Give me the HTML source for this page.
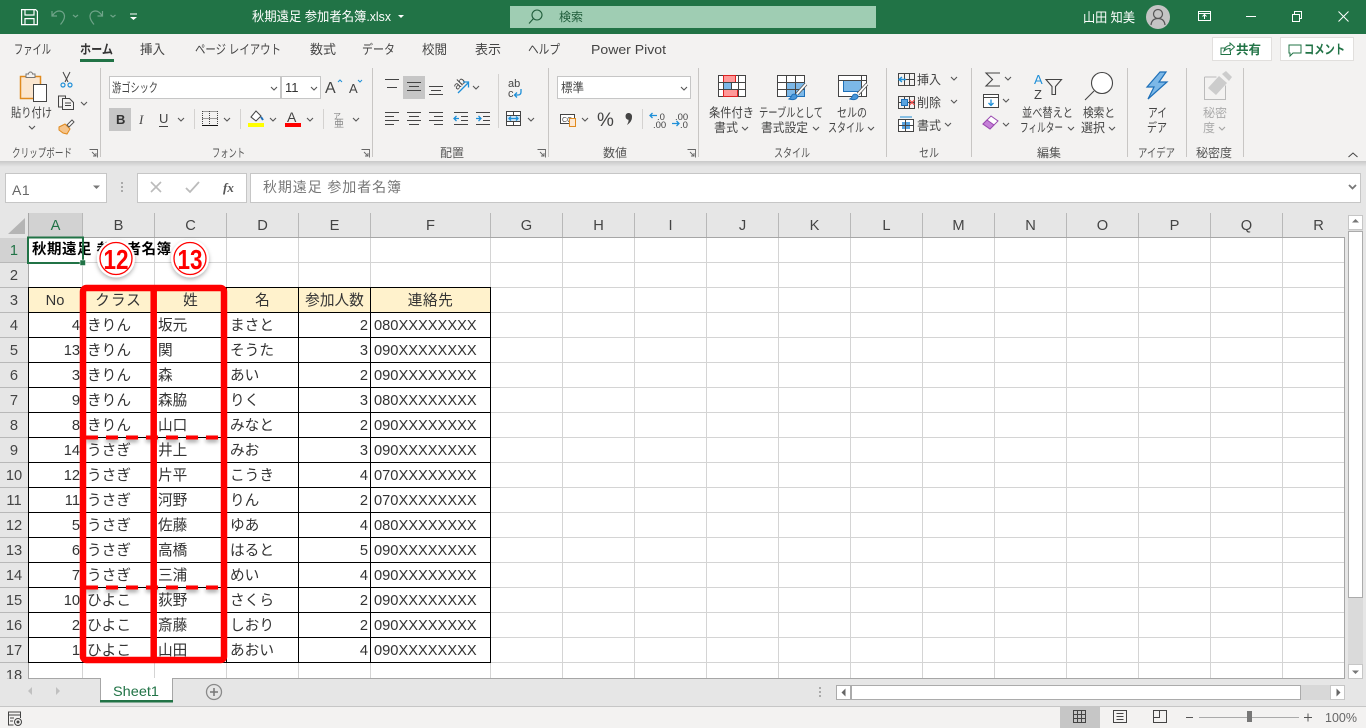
<!DOCTYPE html>
<html lang="ja"><head><meta charset="utf-8"><title>Excel</title>
<style>
html,body{margin:0;padding:0;width:1366px;height:728px;overflow:hidden;background:#fff}
svg{display:block;position:absolute;left:0;top:0;font-family:"Liberation Sans","Noto Sans CJK JP",sans-serif}
.t{font-size:13px;fill:#444}
.r{font-size:12.5px;fill:#444}
.l{font-size:12px;fill:#555}
.h{font-size:14.67px;fill:#444;text-anchor:middle}
.c{font-size:14.67px;fill:#333}
.n{font-size:14.67px;fill:#333;text-anchor:end}
.m{font-size:14.67px;fill:#333;text-anchor:middle}
.ic{fill:none;stroke:#444;stroke-width:1}
.bl{fill:none;stroke:#1e8fd8;stroke-width:1.3}
</style></head><body>
<svg width="1366" height="728" viewBox="0 0 1366 728" xmlns="http://www.w3.org/2000/svg">
<defs>
<path id="ch" d="M0 0l3 3 3-3" fill="none" stroke="#555" stroke-width="1.1"/>
<linearGradient id="sh" x1="0" y1="0" x2="0" y2="1"><stop offset="0" stop-color="#c8c8c8"/><stop offset="1" stop-color="#e6e6e6"/></linearGradient>
<filter id="ds" filterUnits="userSpaceOnUse" x="60" y="420" width="190" height="190"><feDropShadow dx="0" dy="2.500" stdDeviation="2" flood-color="#000" flood-opacity=".4"/></filter>
<filter id="ds2" x="-30%" y="-30%" width="160%" height="160%"><feDropShadow dx="0" dy="2" stdDeviation="2" flood-color="#000" flood-opacity=".3"/></filter>
</defs>

<!-- backgrounds -->
<rect width="1366" height="728" fill="#e6e6e6"/>
<rect y="0" width="1366" height="34" fill="#217346"/>
<rect y="34" width="1366" height="127" fill="#f3f2f1"/>
<rect y="161" width="1366" height="6" fill="url(#sh)"/>

<!-- title bar -->
<g fill="none" stroke="#fff" stroke-width="1.2">
<path d="M21.600 9.600h14l1.800 1.800v13.200h-15.800z"/><path d="M25 9.600v5.400h9v-5.400M25 24.600v-6h9v6"/>
</g>
<g fill="none" stroke="#6fa489" stroke-width="1.2">
<path d="M52 11v5h5M52.500 15.500c2-3 4-4.500 6.500-4.500 3.500 0 5.500 2.500 5.500 5.500 0 2.500-1.500 5-4 8"/>
<path d="M73 15l2.500 2 2.500-2"/>
<path d="M102.500 11v5h-5M102 15.500c-2-3-4-4.500-6.500-4.500-3.500 0-5.500 2.500-5.500 5.500 0 2.500 1.500 5 4 8"/>
<path d="M110.500 15l2.500 2 2.500-2"/>
</g>
<path d="M130 14h7" stroke="#fff" fill="none"/><path d="M130 17l3.500 3 3.500-3z" fill="#fff"/>
<text x="252" y="21" font-size="13" fill="#fff" textLength="139" lengthAdjust="spacingAndGlyphs">秋期遠足 参加者名簿.xlsx</text>
<path d="M398 15h6l-3 3z" fill="#fff"/>
<rect x="510" y="6" width="366" height="22" fill="#9fcdb3"/>
<g fill="none" stroke="#1f5c3a" stroke-width="1.1"><circle cx="537" cy="15" r="5"/><path d="M533.500 18.500l-4.500 5"/></g>
<text x="559" y="21" font-size="12" fill="#1f5c3a">検索</text>
<text x="1083" y="22" font-size="13" fill="#fff" textLength="52" lengthAdjust="spacingAndGlyphs">山田 知美</text>
<circle cx="1158" cy="17" r="12" fill="#c4c4c4"/>
<g fill="none" stroke="#555" stroke-width="1.2"><circle cx="1158" cy="14" r="4.500"/><path d="M1151 25c.5-4.500 3-6.500 7-6.500s6.500 2 7 6.500"/></g>
<g fill="none" stroke="#fff" stroke-width="1">
<rect x="1198.500" y="11.500" width="12" height="9"/><path d="M1198.500 13.500h12M1204.500 19v-4M1202.500 16.500l2-2 2 2"/>
<path d="M1246 16.500h10"/>
<rect x="1292.500" y="14.500" width="7" height="7"/><path d="M1294.500 14v-2.500h7v7h-2"/>
<path d="M1338.500 11.500l10 10M1348.500 11.500l-10 10"/>
</g>

<!-- tabs -->
<g>
<text x="14" y="54" class="t" textLength="37" lengthAdjust="spacingAndGlyphs">ファイル</text>
<text x="80" y="54" class="t" font-weight="700" textLength="33" lengthAdjust="spacingAndGlyphs" style="fill:#333">ホーム</text>
<text x="140" y="54" class="t" textLength="25" lengthAdjust="spacingAndGlyphs">挿入</text>
<text x="195" y="54" class="t" textLength="86" lengthAdjust="spacingAndGlyphs">ページ レイアウト</text>
<text x="310" y="54" class="t" textLength="26" lengthAdjust="spacingAndGlyphs">数式</text>
<text x="362" y="54" class="t" textLength="33" lengthAdjust="spacingAndGlyphs">データ</text>
<text x="422" y="54" class="t" textLength="25" lengthAdjust="spacingAndGlyphs">校閲</text>
<text x="475" y="54" class="t" textLength="26" lengthAdjust="spacingAndGlyphs">表示</text>
<text x="528" y="54" class="t" textLength="32" lengthAdjust="spacingAndGlyphs">ヘルプ</text>
<text x="591" y="54" class="t" textLength="75" lengthAdjust="spacingAndGlyphs">Power Pivot</text>
</g>
<rect x="80" y="59" width="34" height="3" fill="#217346"/>
<rect x="1212.500" y="37.500" width="59" height="23" fill="#fff" stroke="#e1dfdd"/>
<rect x="1280.500" y="37.500" width="73" height="23" fill="#fff" stroke="#e1dfdd"/>
<g fill="none" stroke="#217346" stroke-width="1"><path d="M1226 48h-5v6.500h9.500v-3M1224 51c1-4 3-5.500 6-5.500v-2.500l4.500 4-4.500 4v-2.500c-2.500 0-4.500 1-6 2.500z"/>
<path d="M1289 45h12v8h-8l-3 3v-3h-1z"/></g>
<text x="1236" y="54" font-size="12.500" font-weight="700" fill="#217346" textLength="25" lengthAdjust="spacingAndGlyphs">共有</text>
<text x="1304" y="54" font-size="13" font-weight="700" fill="#217346" textLength="41" lengthAdjust="spacingAndGlyphs">コメント</text>

<!-- ribbon separators -->
<g stroke="#c8c6c4" stroke-width="1">
<path d="M100.500 68v89M372.500 68v89M548.500 68v89M698.500 68v89M886.500 68v89M971.500 68v89M1127.500 68v89M1186.500 68v89M1243.500 68v89"/>
<path d="M194.500 109v20M240.500 109v20M323.500 109v20M498.500 74v54M642.500 109v20" stroke="#d4d2d0"/>
</g>

<!-- clipboard -->
<rect x="20.500" y="76.500" width="20" height="22" fill="#fbe6cf" stroke="#e08a1e" stroke-width="1.500"/>
<path d="M26 76v-2h2.500a2 2 0 0 1 4 0h2.500v3.500h-9z" fill="#f3f2f1" stroke="#777"/>
<rect x="33.500" y="84.500" width="13" height="17" fill="#fff" stroke="#444"/>
<text x="11" y="117" class="r" textLength="41" lengthAdjust="spacingAndGlyphs">貼り付け</text>
<use href="#ch" x="29" y="126"/>
<g fill="none" stroke="#444"><path d="M63 72l5 10M70 72l-5 10"/></g>
<g fill="none" stroke="#1e8fd8" stroke-width="1.200"><circle cx="63" cy="85" r="2"/><circle cx="70" cy="85" r="2"/></g>
<g fill="none" stroke="#444"><path d="M62 107h-3.500v-11h7v2"/><path d="M62.500 98.500h7l4 4v7h-11z" fill="#f3f2f1"/><path d="M65 103h6M65 105.500h6"/></g>
<use href="#ch" x="81" y="102"/>
<path d="M59 127l6-3 5 5-3 5-4-1-4-3z" fill="#f6c48a" stroke="#e08a1e"/><path d="M67 125l5-5 2 2-5 5z" fill="#fff" stroke="#555"/>
<text x="12" y="157" class="l" textLength="60" lengthAdjust="spacingAndGlyphs">クリップボード</text>
<g id="lau" fill="none" stroke="#666" stroke-width=".9"><path d="M89.500 149.500h8v8M92 152l4 4M96 153v3h-3"/></g>
<use href="#lau" x="272"/><use href="#lau" x="448"/><use href="#lau" x="598"/>

<!-- font -->
<rect x="109.500" y="76.500" width="171" height="22" fill="#fff" stroke="#c6c6c6"/>
<rect x="281.500" y="76.500" width="39" height="22" fill="#fff" stroke="#c6c6c6"/>
<text x="112" y="92" class="r" textLength="46" lengthAdjust="spacingAndGlyphs">游ゴシック</text>
<text x="285" y="92" font-size="13" fill="#333">11</text>
<use href="#ch" x="271" y="87"/><use href="#ch" x="311" y="87"/>
<text x="325" y="93" font-size="16" fill="#444">A</text><path d="M338 82l2-2 2 2" fill="none" stroke="#1e8fd8"/>
<text x="349" y="93" font-size="13" fill="#444">A</text><path d="M358 80l2 2 2-2" fill="none" stroke="#1e8fd8"/>
<rect x="109" y="108" width="22" height="23" fill="#c6c6c6"/>
<text x="116" y="124" font-size="13" font-weight="700" fill="#333">B</text>
<text x="139" y="124" font-size="13" font-style="italic" fill="#444" font-family="Liberation Serif">I</text>
<text x="159" y="123" font-size="13" fill="#444">U</text><path d="M159 126.500h9" stroke="#444"/>
<use href="#ch" x="178" y="118"/>
<g stroke="#444" stroke-dasharray="1 1" fill="none"><path d="M202.500 111.500h15M202.500 118.500h15M202.500 111v14M209.500 111v14M217.500 111v14"/></g><path d="M202 125.500h16" stroke="#111"/>
<use href="#ch" x="224" y="118"/>
<path d="M251 117l5-6 5 5-5 5z" fill="#fff" stroke="#444"/><path d="M261 117l2 3" stroke="#1e6fb8" stroke-width="2"/>
<rect x="248" y="123" width="16" height="4" fill="#ffff00"/>
<use href="#ch" x="270" y="118"/>
<text x="287" y="122" font-size="14" fill="#444">A</text>
<rect x="285" y="123" width="16" height="4" fill="#f00"/>
<use href="#ch" x="307" y="118"/>
<text x="333" y="119" font-size="8" fill="#888">ア</text><text x="334" y="127" font-size="10" fill="#888">亜</text>
<use href="#ch" x="353" y="118"/>
<text x="212" y="157" class="l" textLength="33" lengthAdjust="spacingAndGlyphs">フォント</text>

<!-- alignment -->
<rect x="403" y="76" width="22" height="23" fill="#c6c6c6"/>
<g class="ic" stroke="#444">
<path d="M385 79.500h14M387 87.500h10"/>
<path d="M407 82.500h14M409 86.500h10M407 90.500h14"/>
<path d="M429 86.500h14M431 90.500h10M429 94.500h14"/>
<path d="M385 112.500h14M385 116.500h9M385 120.500h14M385 124.500h9"/>
<path d="M407 112.500h14M409 116.500h10M407 120.500h14M409 124.500h10"/>
<path d="M429 112.500h14M434 116.500h9M429 120.500h14M434 124.500h9"/>
<path d="M454 112.500h14M461 116.500h7M461 120.500h7M454 124.500h14"/>
<path d="M476 112.500h14M483 116.500h7M483 120.500h7M476 124.500h14"/>
</g>
<g class="bl"><path d="M459 118.500h-5M456.500 116l-2.500 2.500 2.500 2.500M476 118.500h5M478.500 116l2.500 2.500-2.500 2.500"/></g>
<text x="453" y="88" font-size="11" fill="#444" transform="rotate(-45 458 84)">ab</text>
<path d="M458 93l10-10M463 82h5.500v5.500" class="bl"/>
<use href="#ch" x="473" y="86"/>
<text x="508" y="87" font-size="11" fill="#444">ab</text><text x="508" y="97" font-size="11" fill="#444">c</text>
<path d="M521 89v3c0 2-1 3-3 3h-3M517 92.500l-2.500 2.500 2.500 2.500" class="bl"/>
<rect x="506.500" y="111.500" width="14" height="14" fill="#fff" stroke="#444"/>
<path d="M506.500 115.500h14M506.500 121.500h14M513.500 111.500v4M513.500 121.500v4" stroke="#444" fill="none"/>
<rect x="507" y="116" width="13" height="5" fill="#cfe6f7"/>
<path d="M509 118.500h9M511 116.500l-2 2 2 2M516 116.500l2 2-2 2" class="bl"/>
<use href="#ch" x="528" y="118"/>
<text x="440" y="157" class="l" textLength="24" lengthAdjust="spacingAndGlyphs">配置</text>

<!-- number -->
<rect x="557.500" y="76.500" width="133" height="22" fill="#fff" stroke="#c6c6c6"/>
<text x="561" y="92" class="r" textLength="23" lengthAdjust="spacingAndGlyphs">標準</text>
<use href="#ch" x="681" y="87"/>
<rect x="560.500" y="114.500" width="14" height="9" fill="#fff" stroke="#444"/>
<text x="562" y="122" font-size="7" fill="#444">CC</text>
<rect x="569.500" y="118.500" width="6" height="8" fill="#fde9d4" stroke="#e08a1e"/>
<use href="#ch" x="582" y="118"/>
<text x="597" y="126" font-size="19" fill="#444">%</text>
<path d="M628 113a3.500 3.500 0 0 1 4 4c0 3.500-2 6-5 8 1-2 1.800-3.500 1.500-5.200a3.500 3.500 0 0 1-.5-6.800z" fill="#444"/>
<text x="657" y="120" font-size="9.500" fill="#444">.0</text><text x="653" y="128" font-size="9.500" fill="#444">.00</text>
<path d="M650 115.500h7M652.500 113l-2.500 2.500 2.500 2.500" class="bl"/>
<text x="675" y="120" font-size="9.500" fill="#444">.00</text><text x="680" y="128" font-size="9.500" fill="#444">.0</text>
<path d="M672 123.500h7M676.500 121l2.500 2.500-2.500 2.500" class="bl"/>
<text x="603" y="157" class="l" textLength="24" lengthAdjust="spacingAndGlyphs">数値</text>

<!-- styles -->
<g fill="none" stroke="#444">
<rect x="718.500" y="75.500" width="27" height="21" fill="#fff"/>
<rect x="723.500" y="75.500" width="12" height="7" fill="#f99" stroke="#d22"/>
<rect x="723.500" y="82.500" width="8" height="7" fill="#7cb8e8" stroke="#444"/>
<rect x="723.500" y="89.500" width="14" height="7" fill="#f99" stroke="#d22"/>
<path d="M738.500 75.500v21M718.500 82.500h27M718.500 89.500h27"/>
<rect x="777.500" y="75.500" width="27" height="21" fill="#fff"/>
<rect x="786.500" y="82.500" width="18" height="14" fill="#7cb8e8" stroke="#1e70b8"/>
<path d="M786.500 75.500v21M795.500 75.500v21M777.500 82.500h27M777.500 89.500h27"/>
<rect x="838.500" y="75.500" width="28" height="21" fill="#fff"/>
<rect x="843.500" y="80.500" width="18" height="11" fill="#7cb8e8" stroke="#1e70b8"/>
<path d="M838.500 80.500h28M861.500 75.500v21"/>
</g>
<g><path d="M806 84l-9 10" stroke="#555" stroke-width="3.400"/><path d="M806 84l-9 10" stroke="#fff" stroke-width="1.800"/><path d="M789 99c3 1 7 1 8-2 .5-2-3-4-5-2-1 2-1 3-3 4z" fill="#4a96d8" stroke="#1e70b8"/>
<path d="M867 84l-9 10" stroke="#555" stroke-width="3.400"/><path d="M867 84l-9 10" stroke="#fff" stroke-width="1.800"/><path d="M850 99c3 1 7 1 8-2 .5-2-3-4-5-2-1 2-1 3-3 4z" fill="#4a96d8" stroke="#1e70b8"/></g>
<text x="709" y="117" class="r" textLength="45" lengthAdjust="spacingAndGlyphs">条件付き</text>
<text x="714" y="132" class="r" textLength="24" lengthAdjust="spacingAndGlyphs">書式</text><use href="#ch" x="742" y="127"/>
<text x="759" y="117" class="r" textLength="64" lengthAdjust="spacingAndGlyphs">テーブルとして</text>
<text x="761" y="132" class="r" textLength="47" lengthAdjust="spacingAndGlyphs">書式設定</text><use href="#ch" x="813" y="127"/>
<text x="837" y="117" class="r" textLength="30" lengthAdjust="spacingAndGlyphs">セルの</text>
<text x="828" y="132" class="r" textLength="36" lengthAdjust="spacingAndGlyphs">スタイル</text><use href="#ch" x="868" y="127"/>
<text x="774" y="157" class="l" textLength="36" lengthAdjust="spacingAndGlyphs">スタイル</text>

<!-- cells -->
<g fill="none" stroke="#444">
<path d="M898.500 73.500h16v12h-16zM898.500 79.500h16M904.500 73.500v12M909.500 73.500v12"/>
<path d="M898.500 96.500h16v12h-16zM898.500 102.500h16M904.500 96.500v12M909.500 96.500v12"/>
<rect x="898.500" y="119.500" width="15" height="12" fill="#fff"/><rect x="902" y="122" width="8" height="7" fill="#5aa4e0" stroke="none"/><path d="M898.500 125.500h15M905.500 119.500v12"/>
</g>
<path d="M906 79.500h-6M902 77l-3 2.500 3 2.500" stroke="#1e8fd8" fill="none" stroke-width="1.400"/>
<rect x="901.500" y="99.500" width="6" height="6" fill="#5aa4e0" stroke="#1e70b8"/>
<path d="M909.500 100l5 5M914.500 100l-5 5" stroke="#e44" fill="none" stroke-width="1.200"/>
<path d="M900 117h12" stroke="#1e8fd8" fill="none"/>
<text x="917" y="84" class="r" textLength="24" lengthAdjust="spacingAndGlyphs">挿入</text>
<text x="917" y="107" class="r" textLength="24" lengthAdjust="spacingAndGlyphs">削除</text>
<text x="917" y="130" class="r" textLength="24" lengthAdjust="spacingAndGlyphs">書式</text>
<use href="#ch" x="951" y="77"/><use href="#ch" x="951" y="100"/><use href="#ch" x="945" y="123"/>
<text x="919" y="157" class="l" textLength="20" lengthAdjust="spacingAndGlyphs">セル</text>

<!-- editing -->
<path d="M1000 73h-14l6.500 6.500-6.500 6.500h14" fill="none" stroke="#444" stroke-width="1.100"/>
<use href="#ch" x="1005" y="77"/>
<rect x="983.500" y="94.500" width="15" height="13" fill="#fff" stroke="#444"/><path d="M983.500 97.500h15" stroke="#444"/>
<path d="M991 99.500v6M988.500 103l2.500 2.500 2.500-2.500" class="bl"/>
<use href="#ch" x="1003" y="99"/>
<path d="M983 124l8-8 7 5-8 8z" fill="#fff" stroke="#9a4ab0"/><path d="M983 124l4-4 7 5-4 4z" fill="#c580d8" stroke="#9a4ab0"/>
<use href="#ch" x="1003" y="123"/>
<text x="1034" y="84" font-size="13" fill="#1e8fd8">A</text>
<text x="1034" y="99" font-size="13" fill="#444">Z</text>
<path d="M1046 79.500h15.500l-6 7v8l-3.500 0v-8z" fill="none" stroke="#444" stroke-width="1.100"/>
<text x="1022" y="117" class="r" textLength="51" lengthAdjust="spacingAndGlyphs">並べ替えと</text>
<text x="1020" y="132" class="r" textLength="43" lengthAdjust="spacingAndGlyphs">フィルター</text><use href="#ch" x="1068" y="127"/>
<circle cx="1102" cy="83" r="10.500" fill="#fff" stroke="#444" stroke-width="1.100"/><path d="M1094 91l-9 9" stroke="#444" fill="none" stroke-width="1.100"/>
<text x="1083" y="117" class="r" textLength="32" lengthAdjust="spacingAndGlyphs">検索と</text>
<text x="1081" y="132" class="r" textLength="24" lengthAdjust="spacingAndGlyphs">選択</text><use href="#ch" x="1109" y="127"/>
<text x="1037" y="157" class="l" textLength="24" lengthAdjust="spacingAndGlyphs">編集</text>

<!-- ideas -->
<path d="M1160 72l-13 15h7l-6 12 19-17h-8l7-10z" fill="#7cb8e8" stroke="#1e70b8" stroke-width="1.200"/>
<text x="1148" y="117" class="r" textLength="19" lengthAdjust="spacingAndGlyphs">アイ</text>
<text x="1147" y="132" class="r" textLength="20" lengthAdjust="spacingAndGlyphs">デア</text>
<text x="1138" y="157" class="l" textLength="37" lengthAdjust="spacingAndGlyphs">アイデア</text>

<!-- sensitivity -->
<path d="M1204.500 77h12M1204.500 77v22.500h21v-14" fill="none" stroke="#bbb"/>
<path d="M1208 88l11-12 8 7-11 12z" fill="#ccc"/><path d="M1222 74l4-3 6 6-3 4z" fill="#ccc"/>
<text x="1203" y="117" font-size="12" fill="#aaa" textLength="24" lengthAdjust="spacingAndGlyphs">秘密</text>
<text x="1203" y="132" font-size="12" fill="#aaa">度</text><use href="#ch" x="1219" y="127" opacity=".5"/>
<text x="1196" y="157" class="l" textLength="36" lengthAdjust="spacingAndGlyphs">秘密度</text>
<path d="M1348.500 157l4.500-4 4.500 4" fill="none" stroke="#444"/>

<!-- formula bar -->
<rect x="5.500" y="173.500" width="101" height="29" fill="#fff" stroke="#c6c6c6"/>
<text x="12" y="195" font-size="14" fill="#666" letter-spacing=".5">A1</text>
<path d="M93 185.500h7l-3.500 3.500z" fill="#777"/>
<g fill="#aaa"><rect x="121" y="182" width="2" height="2"/><rect x="121" y="186" width="2" height="2"/><rect x="121" y="190" width="2" height="2"/></g>
<rect x="137.500" y="173.500" width="109" height="29" fill="#fff" stroke="#c6c6c6"/>
<path d="M151 182l10 10M161 182l-10 10" stroke="#bbb" stroke-width="1.600" fill="none"/>
<path d="M186 188l4 4 9-10" stroke="#bbb" stroke-width="1.800" fill="none"/>
<text x="223" y="192" font-size="13" font-style="italic" font-weight="700" fill="#555" font-family="Liberation Serif">fx</text>
<rect x="250.500" y="173.500" width="1110" height="29" fill="#fff" stroke="#c6c6c6"/>
<text x="263" y="192" font-size="14" fill="#777" textLength="138">秋期遠足 参加者名簿</text>
<path d="M1349 185l3.500 3.500 3.500-3.500" fill="none" stroke="#777" stroke-width="1.800"/>

<!-- headers -->
<rect x="0" y="213" width="1345" height="24" fill="#e6e6e6"/>
<rect x="28" y="213" width="54" height="24" fill="#d2d2d2"/>
<rect x="0" y="238" width="28" height="24" fill="#d2d2d2"/>
<path d="M25 218v16h-17z" fill="#b5b5b5"/>
<g stroke="#b8b8b8" fill="none">
<path d="M82.500 213v24M154.500 213v24M226.500 213v24M298.500 213v24M370.500 213v24M490.500 213v24M562.500 213v24M634.500 213v24M706.500 213v24M778.500 213v24M850.500 213v24M922.500 213v24M994.500 213v24M1066.500 213v24M1138.500 213v24M1210.500 213v24M1282.500 213v24"/>
<path d="M0 262.500h28M0 287.500h28M0 312.500h28M0 337.500h28M0 362.500h28M0 387.500h28M0 412.500h28M0 437.500h28M0 462.500h28M0 487.500h28M0 512.500h28M0 537.500h28M0 562.500h28M0 587.500h28M0 612.500h28M0 637.500h28M0 662.500h28"/>
</g>
<path d="M28.500 213v465M28 237.500h1317" stroke="#a6a6a6" fill="none"/>
<g>
<text x="55.500" y="230" class="h" style="fill:#217346">A</text>
<text x="118.500" y="230" class="h">B</text><text x="190.500" y="230" class="h">C</text><text x="262.500" y="230" class="h">D</text><text x="334.500" y="230" class="h">E</text><text x="430.500" y="230" class="h">F</text><text x="526.500" y="230" class="h">G</text><text x="598.500" y="230" class="h">H</text><text x="670.500" y="230" class="h">I</text><text x="742.500" y="230" class="h">J</text><text x="814.500" y="230" class="h">K</text><text x="886.500" y="230" class="h">L</text><text x="958.500" y="230" class="h">M</text><text x="1030.500" y="230" class="h">N</text><text x="1102.500" y="230" class="h">O</text><text x="1174.500" y="230" class="h">P</text><text x="1246.500" y="230" class="h">Q</text><text x="1318.500" y="230" class="h">R</text>
<text x="14" y="255" class="h" style="fill:#217346">1</text>
<text x="14" y="280" class="h">2</text><text x="14" y="305" class="h">3</text><text x="14" y="330" class="h">4</text><text x="14" y="355" class="h">5</text><text x="14" y="380" class="h">6</text><text x="14" y="405" class="h">7</text><text x="14" y="430" class="h">8</text><text x="14" y="455" class="h">9</text><text x="14" y="480" class="h">10</text><text x="14" y="505" class="h">11</text><text x="14" y="530" class="h">12</text><text x="14" y="555" class="h">13</text><text x="14" y="580" class="h">14</text><text x="14" y="605" class="h">15</text><text x="14" y="630" class="h">16</text><text x="14" y="655" class="h">17</text><text x="14" y="680" class="h">18</text>
</g>

<!-- grid -->
<rect x="29" y="238" width="1316" height="440" fill="#fff"/>
<g stroke="#d4d4d4" fill="none">
<path d="M82.500 238v440M154.500 238v440M226.500 238v440M298.500 238v440M370.500 238v440M490.500 238v440M562.500 238v440M634.500 238v440M706.500 238v440M778.500 238v440M850.500 238v440M922.500 238v440M994.500 238v440M1066.500 238v440M1138.500 238v440M1210.500 238v440M1282.500 238v440"/>
<path d="M29 262.500h1316M29 287.500h1316M29 312.500h1316M29 337.500h1316M29 362.500h1316M29 387.500h1316M29 412.500h1316M29 437.500h1316M29 462.500h1316M29 487.500h1316M29 512.500h1316M29 537.500h1316M29 562.500h1316M29 587.500h1316M29 612.500h1316M29 637.500h1316M29 662.500h1316"/>
</g>
<path d="M1344.500 237v442M28 678.500h1317" stroke="#a6a6a6" fill="none"/>
<rect x="29" y="288" width="461" height="24" fill="#fff2cc"/>
<g stroke="#000" fill="none">
<path d="M28.500 287v376M82.500 287v376M154.500 287v376M226.500 287v376M298.500 287v376M370.500 287v376M490.500 287v376"/>
<path d="M28 287.500h463M28 312.500h463M28 337.500h463M28 362.500h463M28 387.500h463M28 412.500h463M28 437.500h463M28 462.500h463M28 487.500h463M28 512.500h463M28 537.500h463M28 562.500h463M28 587.500h463M28 612.500h463M28 637.500h463M28 662.500h463"/>
</g>

<!-- cells text -->
<text x="32" y="254" font-size="14.500" font-weight="700" fill="#000" textLength="139">秋期遠足 参加者名簿</text>
<g>
<text x="55" y="305" class="m">No</text><text x="118.500" y="305" class="m" letter-spacing="1">クラス</text><text x="190.500" y="305" class="m">姓</text><text x="262.500" y="305" class="m">名</text><text x="334.500" y="305" class="m">参加人数</text><text x="430.500" y="305" class="m" letter-spacing=".5">連絡先</text>

<text x="80" y="330" class="n">4</text><text x="87" y="330" class="c">きりん</text><text x="158" y="330" class="c">坂元</text><text x="230" y="330" class="c">まさと</text><text x="368" y="330" class="n">2</text><text x="374" y="330" class="c">080XXXXXXXX</text>
<text x="80" y="355" class="n">13</text><text x="87" y="355" class="c">きりん</text><text x="158" y="355" class="c">関</text><text x="230" y="355" class="c">そうた</text><text x="368" y="355" class="n">3</text><text x="374" y="355" class="c">090XXXXXXXX</text>
<text x="80" y="380" class="n">3</text><text x="87" y="380" class="c">きりん</text><text x="158" y="380" class="c">森</text><text x="230" y="380" class="c">あい</text><text x="368" y="380" class="n">2</text><text x="374" y="380" class="c">090XXXXXXXX</text>
<text x="80" y="405" class="n">9</text><text x="87" y="405" class="c">きりん</text><text x="158" y="405" class="c">森脇</text><text x="230" y="405" class="c">りく</text><text x="368" y="405" class="n">3</text><text x="374" y="405" class="c">080XXXXXXXX</text>
<text x="80" y="430" class="n">8</text><text x="87" y="430" class="c">きりん</text><text x="158" y="430" class="c">山口</text><text x="230" y="430" class="c">みなと</text><text x="368" y="430" class="n">2</text><text x="374" y="430" class="c">090XXXXXXXX</text>
<text x="80" y="455" class="n">14</text><text x="87" y="455" class="c">うさぎ</text><text x="158" y="455" class="c">井上</text><text x="230" y="455" class="c">みお</text><text x="368" y="455" class="n">3</text><text x="374" y="455" class="c">090XXXXXXXX</text>
<text x="80" y="480" class="n">12</text><text x="87" y="480" class="c">うさぎ</text><text x="158" y="480" class="c">片平</text><text x="230" y="480" class="c">こうき</text><text x="368" y="480" class="n">4</text><text x="374" y="480" class="c">070XXXXXXXX</text>
<text x="80" y="505" class="n">11</text><text x="87" y="505" class="c">うさぎ</text><text x="158" y="505" class="c">河野</text><text x="230" y="505" class="c">りん</text><text x="368" y="505" class="n">2</text><text x="374" y="505" class="c">070XXXXXXXX</text>
<text x="80" y="530" class="n">5</text><text x="87" y="530" class="c">うさぎ</text><text x="158" y="530" class="c">佐藤</text><text x="230" y="530" class="c">ゆあ</text><text x="368" y="530" class="n">4</text><text x="374" y="530" class="c">080XXXXXXXX</text>
<text x="80" y="555" class="n">6</text><text x="87" y="555" class="c">うさぎ</text><text x="158" y="555" class="c">高橋</text><text x="230" y="555" class="c">はると</text><text x="368" y="555" class="n">5</text><text x="374" y="555" class="c">090XXXXXXXX</text>
<text x="80" y="580" class="n">7</text><text x="87" y="580" class="c">うさぎ</text><text x="158" y="580" class="c">三浦</text><text x="230" y="580" class="c">めい</text><text x="368" y="580" class="n">4</text><text x="374" y="580" class="c">090XXXXXXXX</text>
<text x="80" y="605" class="n">10</text><text x="87" y="605" class="c">ひよこ</text><text x="158" y="605" class="c">荻野</text><text x="230" y="605" class="c">さくら</text><text x="368" y="605" class="n">2</text><text x="374" y="605" class="c">090XXXXXXXX</text>
<text x="80" y="630" class="n">2</text><text x="87" y="630" class="c">ひよこ</text><text x="158" y="630" class="c">斎藤</text><text x="230" y="630" class="c">しおり</text><text x="368" y="630" class="n">2</text><text x="374" y="630" class="c">090XXXXXXXX</text>
<text x="80" y="655" class="n">1</text><text x="87" y="655" class="c">ひよこ</text><text x="158" y="655" class="c">山田</text><text x="230" y="655" class="c">あおい</text><text x="368" y="655" class="n">4</text><text x="374" y="655" class="c">090XXXXXXXX</text>
</g>

<!-- selection -->
<rect x="28" y="237.500" width="55" height="25.500" fill="none" stroke="#217346" stroke-width="2"/>
<rect x="80" y="260" width="5.500" height="5.500" fill="#217346" stroke="#fff" stroke-width=".5"/>

<!-- red annotation -->
<g filter="url(#ds)"><path d="M86 437.500H222M86 587.500H222" stroke="#f00" stroke-width="4" stroke-dasharray="12 8" fill="none"/></g>
<rect x="83" y="288" width="141" height="372" rx="3.500" fill="none" stroke="#f00" stroke-width="6.500"/>
<path d="M153.700 288v372" stroke="#f00" stroke-width="6.500" fill="none"/>
<g filter="url(#ds2)"><circle cx="116" cy="258.500" r="19" fill="#fff"/></g>
<circle cx="116" cy="258.500" r="16" fill="#fff" stroke="#f00" stroke-width="1.300"/>
<text x="116" y="269" text-anchor="middle" font-size="28" font-weight="700" fill="#f00" textLength="25" lengthAdjust="spacingAndGlyphs">12</text>
<g filter="url(#ds2)"><circle cx="190" cy="258.500" r="19" fill="#fff"/></g>
<circle cx="190" cy="258.500" r="16" fill="#fff" stroke="#f00" stroke-width="1.300"/>
<text x="190" y="269" text-anchor="middle" font-size="28" font-weight="700" fill="#f00" textLength="25" lengthAdjust="spacingAndGlyphs">13</text>

<!-- vertical scroll -->
<rect x="1345" y="213" width="21" height="466" fill="#e6e6e6"/>
<rect x="1348.500" y="215.500" width="14" height="14" fill="#fff" stroke="#c6c6c6"/>
<path d="M1352 222.500h7l-3.500-3.500z" fill="#777"/>
<rect x="1348" y="230" width="15" height="434" fill="#dadada"/>
<rect x="1348.500" y="231.500" width="14" height="366" fill="#fff" stroke="#ababab"/>
<rect x="1348.500" y="664.500" width="14" height="14" fill="#fff" stroke="#c6c6c6"/>
<path d="M1352 670.500h7l-3.500 3.500z" fill="#777"/>

<!-- sheet tabs -->
<rect y="679" width="1366" height="27" fill="#e6e6e6"/>
<path d="M32 687v8l-4-4zM56 687v8l4-4z" fill="#c0c0c0"/>
<path d="M100.500 679v23h72v-23" fill="#fff" stroke="#a6a6a6"/>
<rect x="101" y="678" width="71" height="2" fill="#fff"/>
<rect x="100" y="700" width="73" height="2.500" fill="#217346"/>
<text x="113" y="696" font-size="14" fill="#217346" textLength="46" lengthAdjust="spacingAndGlyphs">Sheet1</text>
<circle cx="214" cy="692" r="7.500" fill="none" stroke="#8a8a8a" stroke-width="1.300"/>
<path d="M210 692h8M214 688v8" stroke="#777" stroke-width="1.500" fill="none"/>
<g fill="#aaa"><rect x="819" y="687" width="2" height="2"/><rect x="819" y="691" width="2" height="2"/><rect x="819" y="695" width="2" height="2"/></g>
<rect x="836.500" y="685.500" width="14" height="14" fill="#fff" stroke="#ababab"/>
<path d="M845.500 688.500v8l-4-4z" fill="#666"/>
<rect x="851" y="685" width="479" height="15" fill="#d8d8d8"/>
<rect x="851.500" y="685.500" width="449" height="14" fill="#fff" stroke="#ababab"/>
<rect x="1330.500" y="685.500" width="14" height="14" fill="#fff" stroke="#c6c6c6"/>
<path d="M1336.500 688.500v8l4-4z" fill="#666"/>
<path d="M0 706.500h1366" stroke="#c6c6c6"/>

<!-- status bar -->
<rect y="707" width="1366" height="21" fill="#f3f2f1"/>
<g fill="none" stroke="#444"><path d="M8.500 712.500v-.5h12v3h-12zM8.500 715v10h5M20.500 715v3M10 718h4M10 721h3"/><circle cx="18" cy="722" r="3.500"/></g><circle cx="18" cy="722" r="1.500" fill="#444"/>
<rect x="1060" y="707" width="40" height="21" fill="#c6c6c6"/>
<g fill="none" stroke="#444">
<path d="M1073.500 710.500h12v12h-12zM1073.500 714.500h12M1073.500 718.500h12M1077.500 710.500v12M1081.500 710.500v12"/>
<path d="M1113.500 710.500h13v12h-13zM1116.500 713.500h7M1116.500 716.500h7M1116.500 719.500h7"/>
<path d="M1153.500 710.500h13v12h-13zM1153.500 717.500h6v-7"/>
</g>
<path d="M1186 717.500h7M1304 717.500h8M1308 713.500v8" stroke="#555" fill="none"/>
<path d="M1199 717.500h100" stroke="#aaa"/>
<rect x="1247" y="711" width="5" height="11" fill="#777"/>
<text x="1325" y="722" font-size="12.500" fill="#666">100%</text>
</svg>
</body></html>
